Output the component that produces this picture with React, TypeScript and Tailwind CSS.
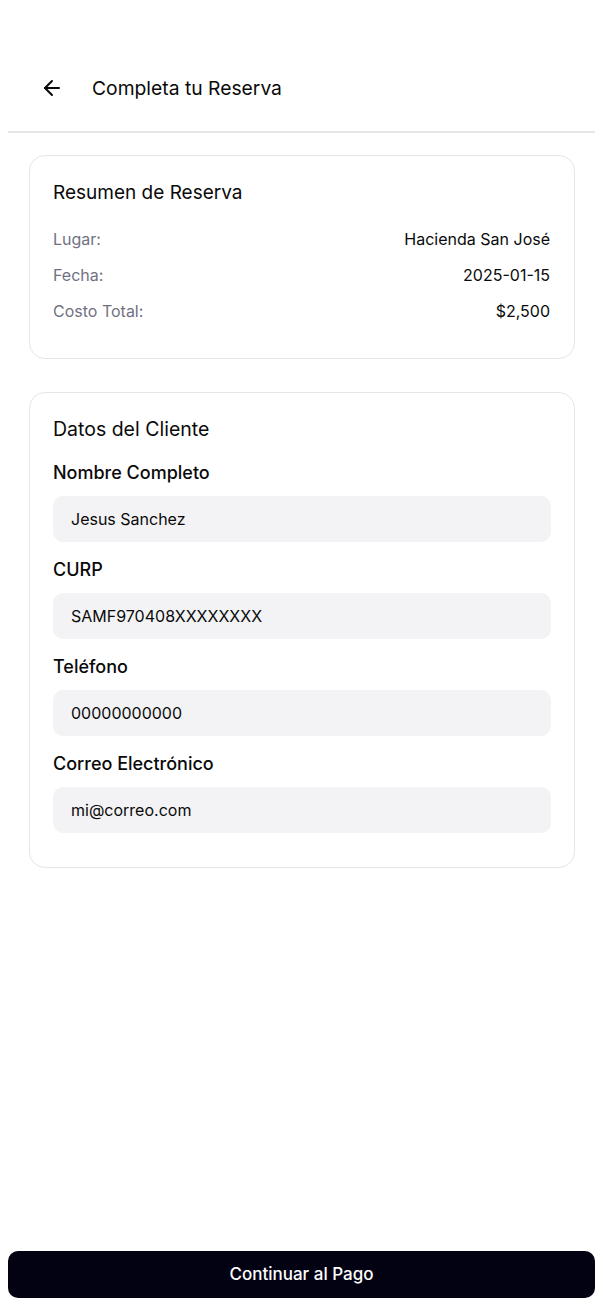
import React, { useState } from 'react';
import { ArrowLeft } from 'lucide-react';

const summary = [
    { label: 'Lugar:', value: 'Hacienda San José' },
    { label: 'Fecha:', value: '2025-01-15' },
    { label: 'Costo Total:', value: '$2,500' },
];

const Field = ({ label, value, onChange }: { label: string; value: string; onChange: (v: string) => void }) => (
    <div className="flex flex-col">
        <label className="text-lg leading-6 font-medium text-[#0a0a0a]">{label}</label>
        <input
            type="text"
            value={value}
            onChange={(e) => onChange(e.target.value)}
            className="mt-[11px] h-[46px] w-full rounded-[10px] bg-[#f3f3f5] pl-[18px] pr-4 text-base text-[#0a0a0a] outline-none"
        />
    </div>
);

export default function App() {
    const [name, setName] = useState('Jesus Sanchez');
    const [curp, setCurp] = useState('SAMF970408XXXXXXXX');
    const [phone, setPhone] = useState('00000000000');
    const [email, setEmail] = useState('mi@correo.com');

    return (
        <div className="h-screen bg-white px-2 flex flex-col font-['Inter',sans-serif] text-[#0a0a0a]">
            {/* header */}
            <header className="pt-[74px] pb-[29px] pl-8 border-b-2 border-[#e6e6e6]">
                <div className="flex items-center h-7 gap-7">
                    <button className="w-6 h-6 flex items-center justify-center text-[#0a0a0a]">
                        <ArrowLeft className="w-6 h-6" strokeWidth={2} />
                    </button>
                    <h1 className="text-[19.3px] leading-7 font-normal">Completa tu Reserva</h1>
                </div>
            </header>

            <div className="ml-[21px] mr-5 mt-[22px] flex flex-col gap-[33px]">
                {/* resumen */}
                <section className="rounded-2xl border border-[#e6e6e6] pl-[23px] pr-[24px] pt-[23px] pb-[35px]">
                    <h2 className="text-[19px] leading-7">Resumen de Reserva</h2>
                    <div className="mt-5 flex flex-col gap-3">
                        {summary.map((row) => (
                            <div key={row.label} className="flex justify-between text-base leading-6">
                                <span className="text-[#717182]">{row.label}</span>
                                <span>{row.value}</span>
                            </div>
                        ))}
                    </div>
                </section>

                {/* datos del cliente */}
                <section className="rounded-2xl border border-[#e6e6e6] pl-[23px] pr-[23px] pt-[22px] pb-[34px]">
                    <h2 className="text-[19.5px] leading-7">Datos del Cliente</h2>
                    <div className="mt-[18px] flex flex-col gap-4">
                        <Field label="Nombre Completo" value={name} onChange={setName} />
                        <Field label="CURP" value={curp} onChange={setCurp} />
                        <Field label="Teléfono" value={phone} onChange={setPhone} />
                        <Field label="Correo Electrónico" value={email} onChange={setEmail} />
                    </div>
                </section>
            </div>

            <div className="flex-1" />

            <button className="mb-[13px] h-[47px] w-full rounded-[10px] bg-[#030213] text-white text-[17px] font-medium">
                Continuar al Pago
            </button>
        </div>
    );
}
